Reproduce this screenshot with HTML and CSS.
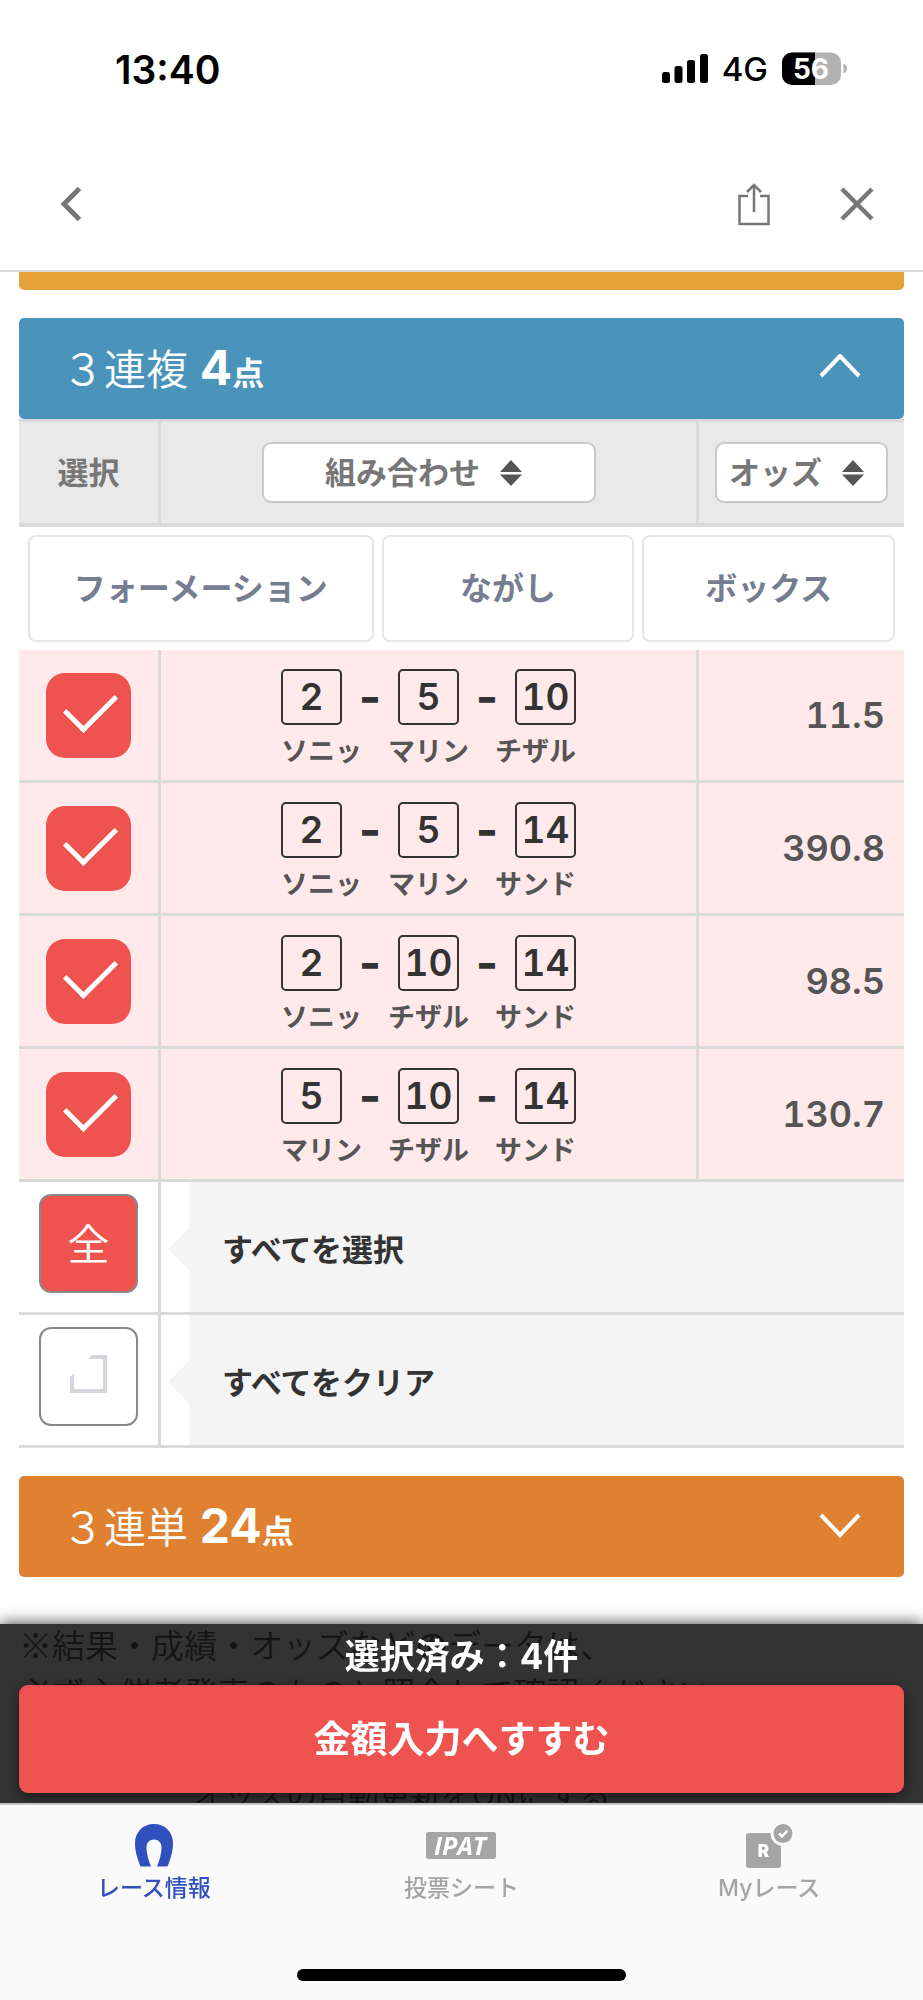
FILE: index.html
```html
<!DOCTYPE html>
<html lang="ja">
<head>
    <meta charset="UTF-8">
    <meta name="viewport" content="width=device-width, initial-scale=1.0">
    <title>オッズ 3連複</title>
    <link rel="stylesheet" href="styles.css">
</head>
<body>
    <header class="header">
        <div class="status">
            <span class="time">13:40</span>
            <div class="status-icons">
                <svg width="46" height="30" viewBox="0 0 46 30">
                    <rect x="0" y="18" width="8" height="11" rx="2.5"/>
                    <rect x="12.5" y="12" width="8" height="17" rx="2.5"/>
                    <rect x="25" y="6" width="8" height="23" rx="2.5"/>
                    <rect x="38" y="0" width="8" height="29" rx="2.5"/>
                </svg>
                <span class="network">4G</span>
                <svg width="66" height="34" viewBox="0 0 66 34">
                    <rect x="0" y="0.5" width="59" height="32.5" rx="10" fill="#b2b2b2"/>
                    <path d="M33 0.5H10A10 10 0 0 0 0 10.500V23A10 10 0 0 0 10 33H33Z"/>
                    <path d="M61.500 11.500Q65 13 65 16.500T61.500 21.500Z" fill="#b2b2b2"/>
                    <text x="29" y="26.500" class="battery-text" text-anchor="middle">56</text>
                </svg>
            </div>
        </div>
        <nav class="nav">
            <button class="icon-button" aria-label="戻る">
                <svg width="22" height="36" viewBox="0 0 22 36"><path d="M19.500 2.500L4 18L19.500 33.500" stroke-width="5"/></svg>
            </button>
            <div class="nav-right">
                <button class="icon-button" aria-label="共有">
                    <svg width="32" height="44" viewBox="0 0 32 44"><path d="M10 14H1.500V42H30.500V14H22M16 30V3M9 10L16 3L23 10" stroke-width="2.500"/></svg>
                </button>
                <button class="icon-button" aria-label="閉じる">
                    <svg width="34" height="34" viewBox="0 0 34 34"><path d="M2 2L32 32M32 2L2 32" stroke-width="4.500"/></svg>
                </button>
            </div>
        </nav>
    </header>

    <main class="main">
        <div class="bar bar-wide"></div>

        <button class="bar bar-trio">
            <span class="bar-title">３連複 <b class="count">4</b><b class="unit">点</b></span>
            <svg width="42" height="26" viewBox="0 0 42 26"><path d="M2 22L21 2L40 22"/></svg>
        </button>

        <table class="odds">
            <colgroup>
                <col class="col-check">
                <col>
                <col class="col-odds">
            </colgroup>
            <thead>
                <tr>
                    <th>選択</th>
                    <th>
                        <button class="sort sort-combo"><span>組み合わせ</span>
                            <svg width="22" height="26" viewBox="0 0 22 26"><path d="M11 0L22 12H0ZM0 14.500H22L11 26Z"/></svg>
                        </button>
                    </th>
                    <th>
                        <button class="sort sort-odds"><span>オッズ</span>
                            <svg width="22" height="26" viewBox="0 0 22 26"><path d="M11 0L22 12H0ZM0 14.500H22L11 26Z"/></svg>
                        </button>
                    </th>
                </tr>
            </thead>
            <tbody>
                <tr>
                    <td colspan="3" class="methods-cell">
                        <div class="methods">
                            <button class="method">フォーメーション</button>
                            <button class="method">ながし</button>
                            <button class="method">ボックス</button>
                        </div>
                    </td>
                </tr>
                <tr class="pick">
                    <td><input type="checkbox" class="check" aria-label="2-5-10" checked></td>
                    <td class="combo">
                        <div class="numbers"><span class="num">2</span><span class="dash">-</span><span class="num">5</span><span class="dash">-</span><span class="num">10</span></div>
                        <div class="names"><span>ソニッ</span><span>マリン</span><span>チザル</span></div>
                    </td>
                    <td class="value">11.5</td>
                </tr>
                <tr class="pick">
                    <td><input type="checkbox" class="check" aria-label="2-5-14" checked></td>
                    <td class="combo">
                        <div class="numbers"><span class="num">2</span><span class="dash">-</span><span class="num">5</span><span class="dash">-</span><span class="num">14</span></div>
                        <div class="names"><span>ソニッ</span><span>マリン</span><span>サンド</span></div>
                    </td>
                    <td class="value">390.8</td>
                </tr>
                <tr class="pick">
                    <td><input type="checkbox" class="check" aria-label="2-10-14" checked></td>
                    <td class="combo">
                        <div class="numbers"><span class="num">2</span><span class="dash">-</span><span class="num">10</span><span class="dash">-</span><span class="num">14</span></div>
                        <div class="names"><span>ソニッ</span><span>チザル</span><span>サンド</span></div>
                    </td>
                    <td class="value">98.5</td>
                </tr>
                <tr class="pick">
                    <td><input type="checkbox" class="check" aria-label="5-10-14" checked></td>
                    <td class="combo">
                        <div class="numbers"><span class="num">5</span><span class="dash">-</span><span class="num">10</span><span class="dash">-</span><span class="num">14</span></div>
                        <div class="names"><span>マリン</span><span>チザル</span><span>サンド</span></div>
                    </td>
                    <td class="value">130.7</td>
                </tr>
                <tr class="bulk">
                    <td><button class="bulk-button all">全</button></td>
                    <td colspan="2"><div class="bulk-label">すべてを選択</div></td>
                </tr>
                <tr class="bulk">
                    <td>
                        <button class="bulk-button" aria-label="クリア">
                            <svg width="37" height="38" viewBox="0 0 37 38"><path d="M18 4L22 0H37V38H0V22L4 18V34H33V4Z" fill="#d3d7dd"/></svg>
                        </button>
                    </td>
                    <td colspan="2"><div class="bulk-label">すべてをクリア</div></td>
                </tr>
            </tbody>
        </table>

        <button class="bar bar-trifecta">
            <span class="bar-title">３連単 <b class="count">24</b><b class="unit">点</b></span>
            <svg width="42" height="26" viewBox="0 0 42 26"><path d="M2 3L21 23L40 3"/></svg>
        </button>

        <p class="note">※結果・成績・オッズなどのデータは、<br>必ず主催者発表のものと照合して確認ください。</p>
        <p class="note note-update">オッズの自動更新をONにする</p>
    </main>

    <footer class="footer">
        <div class="action">
            <p class="selected">選択済み：4件</p>
            <button class="submit">金額入力へすすむ</button>
        </div>
        <nav class="tabs">
            <a href="#" class="tab active">
                <svg width="38" height="44" viewBox="0 0 38 44"><path d="M5.500 42.500C2 34 0 27 0 19C0 8 8 0 19 0S38 8 38 19C38 27 36 34 32.500 42.500H22C25 35 26.500 29 26.500 23.500C26.500 18.500 23.500 15.500 19 15.500S11.500 18.500 11.500 23.500C11.500 29 13 35 16 42.500Z"/></svg>
                レース情報
            </a>
            <a href="#" class="tab">
                <svg width="70" height="44" viewBox="0 0 70 44"><rect x="0" y="8" width="70" height="27" rx="3"/><text x="34" y="31" class="ipat" text-anchor="middle">IPAT</text></svg>
                投票シート
            </a>
            <a href="#" class="tab">
                <svg width="48" height="44" viewBox="0 0 48 44">
                    <rect x="1" y="9" width="35" height="35" rx="3"/>
                    <circle cx="38" cy="9.500" r="12.500" fill="#fafafa"/>
                    <circle cx="38" cy="9.500" r="9.500"/>
                    <path d="M34 9.500L37 12.500L42.500 6.500" fill="none" stroke="#fff" stroke-width="2.500"/>
                    <text x="18.500" y="33" class="race" text-anchor="middle">R</text>
                </svg>
                Myレース
            </a>
        </nav>
        <div class="home"></div>
    </footer>
</body>
</html>
```
FILE: styles.css
```css
* {
    box-sizing: border-box;
}
body {
    margin: 0;
    background-color: #fff;
    color: #333;
    font-family: Inter, "Noto Sans CJK JP", sans-serif;
}
button {
    margin: 0;
    padding: 0;
    border: none;
    background: none;
    font-family: inherit;
    cursor: pointer;
}
p {
    margin: 0;
}

/* header */
.header {
    border-bottom: 2px solid #dadada;
}
.status {
    display: flex;
    justify-content: space-between;
    align-items: center;
    height: 138px;
    padding: 0 75px 0 115px;
}
.time {
    color: #000;
    font-size: 39px;
    font-weight: 600;
}
.status-icons {
    display: flex;
    align-items: center;
    gap: 14px;
}
.network {
    color: #000;
    font-size: 33px;
    font-weight: 500;
}
.battery-text {
    fill: #fff;
    font-size: 28px;
    font-weight: 700;
}
.nav {
    display: flex;
    justify-content: space-between;
    align-items: center;
    height: 132px;
    padding: 0 49px 0 60px;
}
.nav-right {
    display: flex;
    align-items: center;
    gap: 70px;
}
.icon-button {
    display: flex;
}
.icon-button path {
    fill: none;
    stroke: #777;
}

/* bet type bars */
.main {
    padding: 0 19px;
}
.bar {
    display: flex;
    justify-content: space-between;
    align-items: center;
    width: 100%;
    height: 101px;
    padding: 0 43px 4px;
    border-radius: 5px;
    color: #fff;
    font-size: 42px;
}
.bar path {
    fill: none;
    stroke: #fff;
    stroke-width: 4;
}
.bar-wide {
    height: 18px;
    margin-bottom: 28px;
    border-radius: 0 0 5px 5px;
    background-color: #e5a33a;
}
.bar-trio {
    background-color: #4a94bc;
}
.bar-trifecta {
    margin-top: 28px;
    background-color: #e08131;
}
.bar-title {
    font-weight: 350;
}
.count {
    font-size: 48px;
    font-weight: 700;
}
.unit {
    font-size: 32px;
    font-weight: 700;
}

/* odds table */
.odds {
    width: 100%;
    table-layout: fixed;
    border-collapse: separate;
    border-spacing: 0;
}
.col-check {
    width: 142px;
}
.col-odds {
    width: 205px;
}
.odds th,
.odds td {
    padding: 0;
    border-right: 3px solid #dadada;
    text-align: center;
}
.odds th:last-child,
.odds td:last-child {
    border-right: none;
}
.odds th {
    height: 108px;
    border-top: 3px solid #dadada;
    border-bottom: 4px solid #dadada;
    background-color: #e9e9e9;
    color: #777;
    font-size: 31px;
    font-weight: 700;
}
.odds th:first-child {
    padding-bottom: 5px;
}
.sort {
    display: flex;
    justify-content: center;
    align-items: center;
    gap: 20px;
    height: 61px;
    margin: 0 auto;
    padding-right: 10px;
    border: 2px solid #c9c9c9;
    border-radius: 9px;
    background-color: #fff;
    color: #777;
    font-size: 31px;
    font-weight: 700;
}
.sort span {
    padding-bottom: 4px;
}
.sort path {
    fill: #555;
}
.sort-combo {
    width: 334px;
}
.sort-odds {
    width: 173px;
}
.odds .methods-cell {
    padding: 8px 9px;
}
.methods {
    display: grid;
    grid-template-columns: 346fr 253fr 253fr;
    gap: 8px;
}
.method {
    height: 107px;
    padding-bottom: 5px;
    border: 2px solid #e6e6e6;
    border-radius: 8px;
    background-color: #fff;
    color: #757d91;
    font-size: 32px;
    font-weight: 700;
}
.pick td {
    height: 133px;
    border-bottom: 3px solid #dadada;
    background-color: #ffe9eb;
}
.check {
    display: grid;
    place-content: center;
    width: 85px;
    height: 85px;
    margin: 0 auto;
    padding: 0 0 20px 3px;
    border-radius: 19px;
    background-color: #ef5350;
    appearance: none;
}
.check:checked::before {
    content: "";
    width: 24px;
    height: 44px;
    border-right: 5px solid #fff;
    border-bottom: 5px solid #fff;
    transform: rotate(45deg);
}
.odds .combo {
    padding-top: 7px;
}
.numbers {
    display: flex;
    justify-content: center;
    align-items: center;
    gap: 18px;
}
.num {
    width: 61px;
    height: 56px;
    border: 2px solid #333;
    border-radius: 5px;
    font-size: 37px;
    font-variant-numeric: tabular-nums;
    font-weight: 600;
    line-height: 52px;
}
.dash {
    display: flex;
    justify-content: center;
    width: 20px;
    font-size: 48px;
    font-weight: 700;
    line-height: 56px;
}
.names {
    display: flex;
    justify-content: center;
    gap: 26px;
    margin-top: 10px;
    color: #555;
    font-size: 27px;
    font-weight: 700;
    line-height: 34px;
}
.pick .value {
    padding-right: 19px;
    color: #555;
    font-size: 36px;
    font-variant-numeric: tabular-nums;
    font-weight: 600;
    text-align: right;
}
.bulk td {
    height: 133px;
    border-bottom: 3px solid #dadada;
}
.bulk td:first-child {
    padding-bottom: 8px;
}
.bulk-button {
    display: flex;
    justify-content: center;
    align-items: center;
    width: 99px;
    height: 99px;
    margin: 0 auto;
    padding-bottom: 4px;
    border: 2px solid #888;
    border-radius: 12px;
    font-size: 42px;
}
.bulk-button.all {
    background-color: #ef5350;
    color: #fff;
    font-weight: 350;
}
.bulk-label {
    position: relative;
    display: flex;
    align-items: center;
    height: 130px;
    margin-left: 28px;
    padding-left: 33px;
    background-color: #f4f4f4;
    font-size: 31px;
    font-weight: 700;
}
.bulk-label::before {
    content: "";
    position: absolute;
    top: 46px;
    left: -21px;
    border: 21px solid transparent;
    border-left: none;
    border-right-color: #f4f4f4;
}

/* note under the tables */
.note {
    margin-top: 43px;
    color: #666;
    font-family: "Noto Sans CJK JP", sans-serif;
    font-size: 33px;
    font-weight: 350;
    line-height: 48px;
    white-space: nowrap;
}
.note-update {
    margin-top: 53px;
    padding-left: 174px;
    font-size: 31px;
}

/* fixed bottom area */
.footer {
    position: fixed;
    right: 0;
    bottom: 0;
    left: 0;
}
.action {
    padding: 8px 19px 10px;
    background-color: rgba(0, 0, 0, 0.8);
    box-shadow: 0 0 15px rgba(0, 0, 0, 0.8);
    color: #fff;
    text-align: center;
}
.selected {
    font-size: 35px;
    font-weight: 700;
    line-height: 48px;
}
.submit {
    display: block;
    width: 100%;
    height: 108px;
    margin-top: 5px;
    padding-bottom: 5px;
    border-radius: 9px;
    background-color: #ef5350;
    box-shadow: 0 4px 14px rgba(0, 0, 0, 0.5);
    color: #fff;
    font-size: 37px;
    font-weight: 700;
}
.tabs {
    position: relative;
    display: grid;
    grid-template-columns: repeat(3, 1fr);
    height: 166px;
    padding-top: 19px;
    border-top: 2px solid #c4c4c4;
    background-color: #fafafa;
}
.tab {
    display: flex;
    flex-direction: column;
    align-items: center;
    gap: 4px;
    color: #a5a5a5;
    font-size: 23px;
    font-weight: 500;
    line-height: 32px;
    text-decoration: none;
}
.tab svg {
    fill: currentColor;
}
.tab.active {
    color: #3050bf;
}
.ipat {
    fill: #fff;
    font-family: "Open Sans", sans-serif;
    font-size: 25px;
    font-style: italic;
    font-weight: 700;
}
.race {
    fill: #fff;
    font-size: 17px;
    font-weight: 900;
}
.home {
    position: relative;
    height: 31px;
    background-color: #fafafa;
}
.home::before {
    content: "";
    display: block;
    width: 329px;
    height: 12px;
    margin: 0 auto;
    border-radius: 6px;
    background-color: #000;
}
```
